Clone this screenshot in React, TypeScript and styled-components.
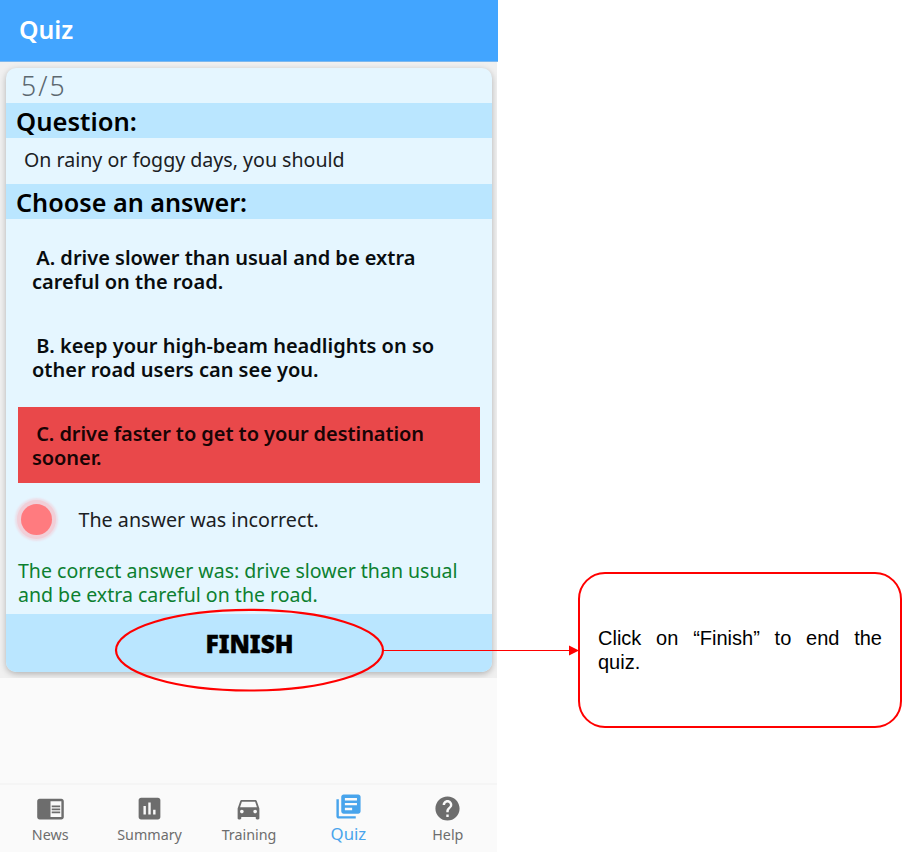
import React from 'react';
import styled, { createGlobalStyle } from 'styled-components';
import {
  MdAssessment,
  MdChromeReaderMode,
  MdDirectionsCar,
  MdHelp,
  MdLibraryBooks,
} from 'react-icons/md';

const GlobalStyle = createGlobalStyle`
  *, *::before, *::after { box-sizing: border-box; }
  body { margin: 0; background: #fff; overflow: hidden; }
`;

const Page = styled.main`
  position: relative;
  display: flex;
  align-items: flex-start;
  width: 902px;
  height: 852px;
  background: #fff;
`;

const Phone = styled.section`
  display: flex;
  flex-direction: column;
  flex: none;
  width: 498px;
  height: 852px;
  font-family: 'Noto Sans', sans-serif;
  color: #000;
`;

const AppBar = styled.header`
  display: flex;
  align-items: center;
  flex: none;
  height: 62px;
  padding: 0 0 3px 19px;
  background: #42a5ff;
  border-bottom: 1px solid #7db8ee;
  color: #fff;
`;

const AppTitle = styled.h1`
  margin: 0;
  font-size: 24.8px;
  font-weight: 600;
  line-height: 30px;
`;

const Content = styled.div`
  flex: 1;
  width: 497px;
  background: #fafafa;
`;

const CardArea = styled.div`
  height: 616px;
  padding: 6px 5px 0 6px;
  background: #f0f0f0;
  overflow: hidden;
`;

const Card = styled.article`
  display: flex;
  flex-direction: column;
  width: 486px;
  height: 604px;
  border-radius: 10px;
  background: #e5f6ff;
  box-shadow: 0 2px 6px rgba(0, 0, 0, 0.26);
  overflow: hidden;
`;

const Counter = styled.div`
  flex: none;
  height: 35px;
  padding-left: 15px;
  font-size: 26.6px;
  font-weight: 320;
  letter-spacing: 2px;
  line-height: 36px;
  color: #5c6870;
`;

const SectionTitle = styled.h2<{ $size: number }>`
  flex: none;
  height: 35px;
  margin: 0;
  padding-left: 10px;
  background: #bae6ff;
  font-size: ${(p) => p.$size}px;
  font-weight: 620;
  line-height: 37px;
`;

const QuestionText = styled.p`
  flex: none;
  height: 46px;
  margin: 0;
  padding: 9px 0 0 18px;
  font-size: 19.6px;
  line-height: 25px;
  color: #1b2023;
`;

const Answers = styled.div`
  display: flex;
  flex-direction: column;
  flex: none;
  gap: 12px;
  padding: 12px 12px 0;
`;

const Answer = styled.div<{ $wrong?: boolean }>`
  height: 76px;
  padding: 15px 0 0 14px;
  background: ${(p) => (p.$wrong ? '#e9484a' : 'transparent')};
  font-size: 20px;
  font-weight: 600;
  line-height: 24.4px;
  letter-spacing: ${(p) => (p.$wrong ? '-0.07px' : '0')};
  text-indent: -1px;
  white-space: pre;
  color: ${(p) => (p.$wrong ? '#180405' : '#080c0e')};
`;

const Result = styled.div`
  display: flex;
  align-items: center;
  flex: none;
  gap: 27px;
  height: 73px;
  padding-left: 14.5px;
  font-size: 19.7px;
  line-height: 25px;
  color: #1b2023;
`;

const Indicator = styled.span`
  width: 31px;
  height: 31px;
  border-radius: 50%;
  background: #ff7b7f;
  box-shadow: 0 0 0 4px #f1cfd8, 0 0 2px 6px #ecdfe9;
`;

const Correction = styled.p`
  flex: none;
  height: 58px;
  margin: 0;
  padding: 2.5px 0 0 12px;
  font-size: 19.55px;
  line-height: 24.5px;
  white-space: pre;
  color: #0c8030;
`;

const FinishButton = styled.button`
  flex: 1;
  padding: 2px 0 0 1px;
  border: 0;
  background: #bae6ff;
  font: 900 24.5px/30px 'Noto Sans', sans-serif;
  -webkit-text-stroke: 0.4px #000;
  color: #000;
`;

const TabBar = styled.nav`
  display: grid;
  grid-template-columns: repeat(5, 1fr);
  flex: none;
  width: 497px;
  height: 69px;
  border-top: 2px solid #f5f5f5;
  background: #fafafa;
`;

const Tab = styled.div<{ $active?: boolean }>`
  display: flex;
  flex-direction: column;
  align-items: center;
  padding: ${(p) => (p.$active ? '6.5px' : '9px')} 0 0 1px;
  color: ${(p) => (p.$active ? '#48a4ec' : '#6d6d6d')};
  svg { flex: none; width: 29px; height: 29px; }
`;

const TabLabel = styled.span<{ $active?: boolean }>`
  margin-top: ${(p) => (p.$active ? '2.5px' : '1px')};
  font-size: ${(p) => (p.$active ? '16.8px' : '14.3px')};
  font-weight: 370;
  line-height: 22px;
`;

const Callout = styled.aside`
  display: flex;
  align-items: center;
  flex: none;
  width: 324px;
  height: 156px;
  margin: 572px 0 0 80px;
  padding: 0 18px;
  border: 2px solid #ff0000;
  border-radius: 27px;
  background: #fff;
`;

const CalloutText = styled.p`
  margin: 0;
  width: 284px;
  font: 20px/24px 'Liberation Sans', Arial, sans-serif;
  text-align: justify;
  color: #000;
`;

const Annotation = styled.svg`
  position: absolute;
  left: 0;
  top: 0;
  pointer-events: none;
`;

const answers = [
  { text: '\u00a0A. drive slower than usual and be extra\ncareful on the road.' },
  { text: '\u00a0B. keep your high-beam headlights on so\nother road users can see you.' },
  { text: '\u00a0C. drive faster to get to your destination\nsooner.', wrong: true },
];

const tabs = [
  { label: 'News', Icon: MdChromeReaderMode },
  { label: 'Summary', Icon: MdAssessment },
  { label: 'Training', Icon: MdDirectionsCar },
  { label: 'Quiz', Icon: MdLibraryBooks, active: true },
  { label: 'Help', Icon: MdHelp },
];

export default function App() {
  return (
    <Page>
      <GlobalStyle />
      <Phone>
        <AppBar>
          <AppTitle>Quiz</AppTitle>
        </AppBar>
        <Content>
          <CardArea>
            <Card>
              <Counter>5/5</Counter>
              <SectionTitle $size={25.6}>Question:</SectionTitle>
              <QuestionText>On rainy or foggy days, you should</QuestionText>
              <SectionTitle $size={25.2}>Choose an answer:</SectionTitle>
              <Answers>
                {answers.map((a) => (
                  <Answer key={a.text} $wrong={a.wrong}>{a.text}</Answer>
                ))}
              </Answers>
              <Result>
                <Indicator />
                <span>The answer was incorrect.</span>
              </Result>
              <Correction>
                {'The correct answer was: drive slower than usual\nand be extra careful on the road.'}
              </Correction>
              <FinishButton>FINISH</FinishButton>
            </Card>
          </CardArea>
        </Content>
        <TabBar>
          {tabs.map(({ label, Icon, active }) => (
            <Tab key={label} $active={active}>
              <Icon />
              <TabLabel $active={active}>{label}</TabLabel>
            </Tab>
          ))}
        </TabBar>
      </Phone>
      <Callout>
        <CalloutText>Click on “Finish” to end the quiz.</CalloutText>
      </Callout>
      <Annotation width="902" height="852" viewBox="0 0 902 852" fill="none">
        <ellipse cx="249.5" cy="650.2" rx="133.5" ry="40.3" stroke="#ff0000" strokeWidth="2.2" />
        <path d="M383 650.5H570" stroke="#ff0000" strokeWidth="1.1" />
        <path d="M569 645.6L579 650.5L569 655.4Z" fill="#ff0000" />
      </Annotation>
    </Page>
  );
}
